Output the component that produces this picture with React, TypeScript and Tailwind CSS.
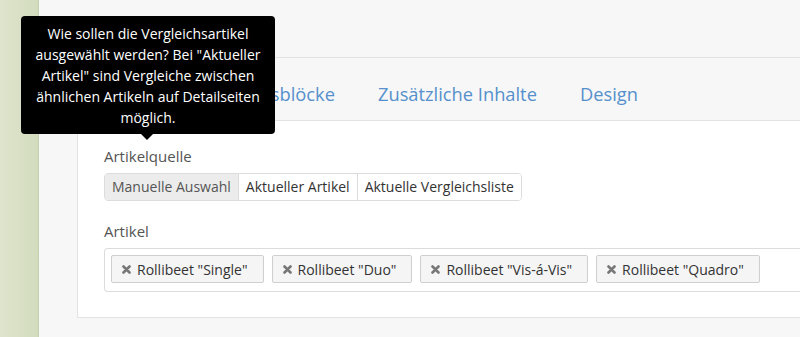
import React from "react";

const tags = ['Rollibeet "Single"', 'Rollibeet "Duo"', 'Rollibeet "Vis-á-Vis"', 'Rollibeet "Quadro"'];
const sources = ["Manuelle Auswahl", "Aktueller Artikel", "Aktuelle Vergleichsliste"];
const tabs = ["Allgemein", "Inhaltsblöcke", "Zusätzliche Inhalte", "Design"];

function TimesIcon() {
  return (
    <svg width="9" height="9" viewBox="0 0 9 9" className="shrink-0">
      <path d="M1.5 1.5 L7.5 7.5 M7.5 1.5 L1.5 7.5" stroke="#777" strokeWidth="2.6" strokeLinecap="round" />
    </svg>
  );
}

export default function App() {
  return (
    <div
      className="relative w-[800px] h-[337px] flex overflow-hidden bg-[#f7f7f7]"
      style={{ fontFamily: '"Open Sans", "Liberation Sans", sans-serif' }}
    >
      {/* ── Sidebar strip ── */}
      <div className="w-[39px] h-full shrink-0 bg-gradient-to-r from-[#dfe5cd] to-[#d3dbbd] border-r border-[#c6cfae]" />

      {/* ── Main ── */}
      <div className="flex-1 flex flex-col min-w-0">
        <div className="h-[58px] shrink-0 border-b border-[#e3e3e3]" />

        {/* Tabs */}
        <div className="h-[62px] shrink-0 pl-[38px] flex items-center">
          <div className="flex items-center gap-[43px] pl-[18px] text-[18.3px] leading-none text-[#5590cc] pt-[10px] whitespace-nowrap">
            {tabs.map((t) => (
              <span key={t}>{t}</span>
            ))}
          </div>
        </div>

        {/* Panel */}
        <div className="ml-[38px] bg-white border-l border-t border-b border-[#e3e3e3] pl-[26px] pt-[25px] pb-[25px]">
          <div className="text-[15px] leading-[20px] text-[#555]">Artikelquelle</div>
          <div className="mt-[7px] inline-flex border border-[#dcdcdc] rounded-[4px] overflow-hidden text-[14px] leading-[26px] text-[#333]">
            {sources.map((s, i) => (
              <div
                key={s}
                className={
                  i === 0
                    ? "px-[7px] bg-[#ececec] text-[#555]"
                    : "px-[7px] bg-white border-l border-[#dcdcdc]"
                }
              >
                {s}
              </div>
            ))}
          </div>

          <div className="mt-[20px] text-[15px] leading-[20px] text-[#555]">Artikel</div>
          <div className="mt-[7px] h-[44px] border border-[#dcdcdc] border-r-0 rounded-l-[4px] pl-[6px] pt-[6px] flex gap-[8px]">
            {tags.map((t) => (
              <div
                key={t}
                className="h-[28px] flex items-center gap-[6px] pl-[10px] pr-[15px] bg-[#f5f5f5] border border-[#cfcfcf] rounded-[2px] text-[14px] text-[#333] whitespace-nowrap"
              >
                <TimesIcon />
                <span>{t}</span>
              </div>
            ))}
          </div>
        </div>
      </div>

      {/* ── Tooltip ── */}
      <div className="absolute left-[21px] top-[16px] w-[254px] h-[118px] bg-black rounded-[4px] text-white text-[14px] leading-[21px] text-center pt-[7px]">
        Wie sollen die Vergleichsartikel
        <br />
        ausgewählt werden? Bei "Aktueller
        <br />
        Artikel" sind Vergleiche zwischen
        <br />
        ähnlichen Artikeln auf Detailseiten
        <br />
        möglich.
        <div className="absolute left-[120px] -bottom-[6px] w-0 h-0 border-l-[6px] border-r-[6px] border-t-[6px] border-l-transparent border-r-transparent border-t-black" />
      </div>
    </div>
  );
}
